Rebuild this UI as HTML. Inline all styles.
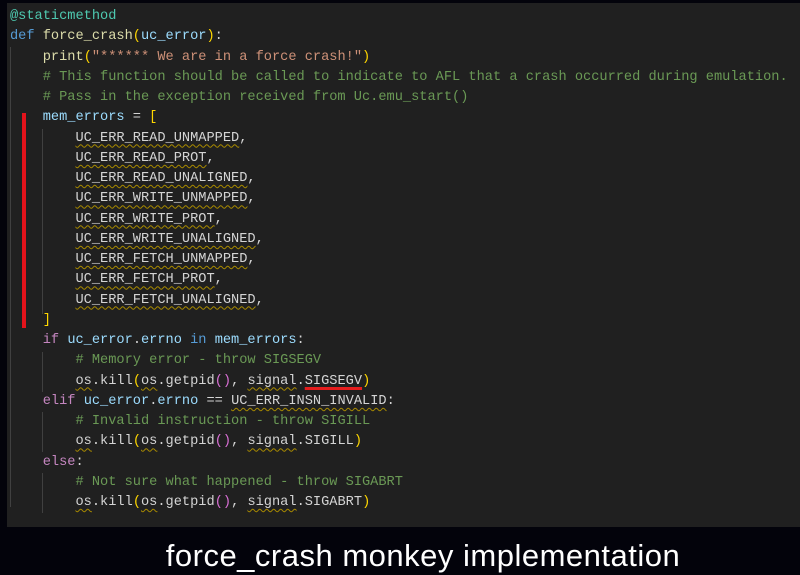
<!DOCTYPE html>
<html><head><meta charset="utf-8"><style>
html,body{margin:0;padding:0;width:800px;height:575px;background:#03030b;overflow:hidden}
#panel{position:absolute;left:7px;top:3px;width:793px;height:524px;background:#202020}
#code{position:absolute;left:10px;top:7px;font-family:"Liberation Mono",monospace;font-size:13.65px;line-height:20.25px;color:#d4d4d4;white-space:pre;margin:0}
.l{height:20.25px}
.dec{color:#4ec9b0}.kw{color:#569cd6}.fn{color:#dcdcaa}.v{color:#9cdcfe}.p{color:#ffd700}.pp{color:#da70d6}
.s{color:#ce9178}.c{color:#6a9955}.k2{color:#c586c0}
.w{text-decoration:underline wavy #a88a00;text-decoration-thickness:1px;text-underline-offset:3px}
.r{text-decoration:underline solid #e51d1d;text-decoration-thickness:3px;text-underline-offset:3px}
.g{position:absolute;width:1px;background:#404040}
#bar{position:absolute;left:22px;top:113px;width:4px;height:215px;background:#e3131b}
#cap{position:absolute;left:0;width:846px;top:538px;text-align:center;color:#fff;font-family:"Liberation Sans",sans-serif;font-size:31px;letter-spacing:0.5px}
</style></head><body>
<div id="panel"></div>
<div class="g" style="left:10px;top:47px;height:460px"></div>
<div class="g" style="left:42px;top:129px;height:185px"></div>
<div class="g" style="left:42px;top:352px;height:40px"></div>
<div class="g" style="left:42px;top:412px;height:40px"></div>
<div class="g" style="left:42px;top:473px;height:40px"></div>
<div id="bar"></div>
<pre id="code"><div class="l"><span class="dec">@staticmethod</span></div><div class="l"><span class="kw">def</span> <span class="fn">force_crash</span><span class="p">(</span><span class="v">uc_error</span><span class="p">)</span>:</div><div class="l">    <span class="fn">print</span><span class="p">(</span><span class="s">"****** We are in a force crash!"</span><span class="p">)</span></div><div class="l">    <span class="c"># This function should be called to indicate to AFL that a crash occurred during emulation.</span></div><div class="l">    <span class="c"># Pass in the exception received from Uc.emu_start()</span></div><div class="l">    <span class="v">mem_errors</span> = <span class="p">[</span></div><div class="l">        <span class="w">UC_ERR_READ_UNMAPPED</span>,</div><div class="l">        <span class="w">UC_ERR_READ_PROT</span>,</div><div class="l">        <span class="w">UC_ERR_READ_UNALIGNED</span>,</div><div class="l">        <span class="w">UC_ERR_WRITE_UNMAPPED</span>,</div><div class="l">        <span class="w">UC_ERR_WRITE_PROT</span>,</div><div class="l">        <span class="w">UC_ERR_WRITE_UNALIGNED</span>,</div><div class="l">        <span class="w">UC_ERR_FETCH_UNMAPPED</span>,</div><div class="l">        <span class="w">UC_ERR_FETCH_PROT</span>,</div><div class="l">        <span class="w">UC_ERR_FETCH_UNALIGNED</span>,</div><div class="l">    <span class="p">]</span></div><div class="l">    <span class="k2">if</span> <span class="v">uc_error</span>.<span class="v">errno</span> <span class="kw">in</span> <span class="v">mem_errors</span>:</div><div class="l">        <span class="c"># Memory error - throw SIGSEGV</span></div><div class="l">        <span class="w">os</span>.kill<span class="p">(</span><span class="w">os</span>.getpid<span class="pp">()</span>, <span class="w">signal</span>.<span class="r">SIGSEGV</span><span class="p">)</span></div><div class="l">    <span class="k2">elif</span> <span class="v">uc_error</span>.<span class="v">errno</span> == <span class="w">UC_ERR_INSN_INVALID</span>:</div><div class="l">        <span class="c"># Invalid instruction - throw SIGILL</span></div><div class="l">        <span class="w">os</span>.kill<span class="p">(</span><span class="w">os</span>.getpid<span class="pp">()</span>, <span class="w">signal</span>.SIGILL<span class="p">)</span></div><div class="l">    <span class="k2">else</span>:</div><div class="l">        <span class="c"># Not sure what happened - throw SIGABRT</span></div><div class="l">        <span class="w">os</span>.kill<span class="p">(</span><span class="w">os</span>.getpid<span class="pp">()</span>, <span class="w">signal</span>.SIGABRT<span class="p">)</span></div></pre>
<div id="cap">force_crash monkey implementation</div>
</body></html>
